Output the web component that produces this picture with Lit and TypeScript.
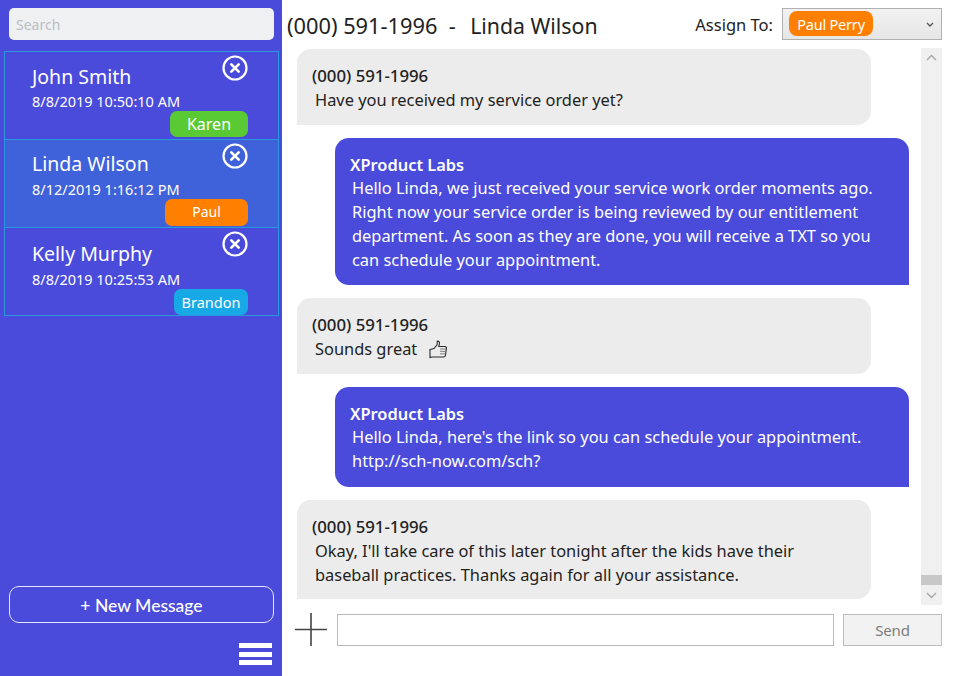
import { LitElement, html, css } from "lit";
import { customElement } from "lit/decorators.js";

const contacts = [
  { name: "John Smith", date: "8/8/2019 10:50:10 AM", tag: "Karen", color: "#59c934", w: 78, h: 26, bottom: 2, shift: 0, gap: 1, fs: 16, sel: false },
  { name: "Linda Wilson", date: "8/12/2019 1:16:12 PM", tag: "Paul", color: "#ff8000", w: 83, h: 27, bottom: 1, shift: -1, gap: 2, fs: 14, sel: true },
  { name: "Kelly Murphy", date: "8/8/2019 10:25:53 AM", tag: "Brandon", color: "#17a8e6", w: 74, h: 26, bottom: 0, shift: 1, gap: 2, fs: 14.5, sel: false },
];

const closeIcon = html`<svg class="x" width="26" height="26" viewBox="0 0 26 26" fill="none" stroke="#fff">
  <circle cx="13" cy="13" r="11.5" stroke-width="2.2"/>
  <path d="M9.3 9.3l7.4 7.4M16.7 9.3l-7.4 7.4" stroke-width="2.6" stroke-linecap="round"/>
</svg>`;

const thumb = html`<svg class="thumb" width="19" height="19" viewBox="0 0 19 19" fill="none" stroke="#2b2b2b" stroke-width="1.1">
  <path d="M1 9.5L5 8.5L8.2 4.5V1.2c1.6-.4 2.6.8 2.2 2.6L9.8 6.5H16c1.2 0 1.6 1 1.4 1.8l-1 7.2c-.2 1-.8 1.5-1.8 1.5H3L1 17.5z"/>
  <path d="M11 9h6M11 11.4h6M11 13.8h5.6" stroke-width=".9" stroke="#777"/>
</svg>`;

@customElement("app-root")
export class AppRoot extends LitElement {
  static styles = css`
    :host { display: flex; width: 965px; height: 676px; background: #fff; overflow: hidden;
      font-family: "Noto Sans", "Open Sans", sans-serif; color: #222; }
    * { box-sizing: border-box; }
    .side { width: 282px; height: 676px; background: #4a4bdb; display: flex; flex-direction: column; padding: 8px 3px 0 4px; color: #fff; }
    .search { height: 32px; margin: 0 5px 12px 5px; background: #eef0f2; border-radius: 5px; color: #bcbec2; font-size: 14px; line-height: 33px; padding-left: 7px; }
    .card { height: 89px; margin-top: -1px; border: 1px solid #2a98de; padding: 12px 0 0 27px; position: relative; }
    .card.sel { background: #3f62da; }
    .name { font-size: 19.5px; line-height: 26px; }
    .date { font-size: 14.5px; line-height: 20px; }
    .x { position: absolute; right: 30px; top: 3px; }
    .tag { position: absolute; right: 30px; border-radius: 7px; color: #fff; line-height: 26px; text-align: center; }
    .spacer { flex: 1; }
    .new { height: 37px; margin: 0 5px 0 5px; border: 1.5px solid #e6e8fb; border-radius: 10px; font-size: 17.5px; line-height: 37px; text-align: center; font-family: "Lato", sans-serif; font-weight: 500; }
    .burger { align-self: flex-end; width: 33px; margin: 20px 7px 11px 0; display: flex; flex-direction: column; gap: 3.5px; }
    .burger i { display: block; height: 5px; background: #fff; }
    .main { width: 683px; height: 676px; display: flex; flex-direction: column; padding: 8px 0 0 5px; }
    .head { height: 32px; display: flex; align-items: center; margin-bottom: 8px; width: 655px; }
    .title { font-size: 21.8px; white-space: pre; flex: 1; padding-top: 2px; }
    .title span { font-size: 21.3px; margin-left: 3px; }
    .assign { font-size: 16.5px; margin-right: 9px; padding-top: 1px; }
    .combo { width: 160px; height: 32px; border: 1.5px solid #b0b0b0; background: linear-gradient(#f2f2f2, #e6e6e6); display: flex; align-items: center; justify-content: space-between; padding: 0 7px 0 6px; }
    .pill { width: 84px; height: 25px; margin-top: -2px; background: #ff8000; border-radius: 8px; color: #fff; font-size: 14.5px; line-height: 27px; text-align: center; letter-spacing: -.2px; }
    .body { height: 557px; display: flex; width: 655px; }
    .list { width: 639px; padding: 1px 0 0 10px; margin-right: -4px; display: flex; flex-direction: column; gap: 13px; }
    .b { width: 574px; border-radius: 14px; font-size: 16.4px; line-height: 24px; }
    .in { background: #ececec; border-bottom-left-radius: 0; padding: 15px 0 0 15px; }
    .out { background: #4a4bdb; color: #fff; border-bottom-right-radius: 0; padding: 15px 0 0 15px; margin-left: 38px; }
    .from { font-weight: 500; font-size: 16.8px; }
    .out .from { font-weight: 600; font-size: 16.4px; }
    .text { padding-left: 3px; white-space: nowrap; }
    .out .text { padding-left: 2px; margin-top: -1px; }
    .sb { width: 21px; background: #f0f0f0; display: flex; flex-direction: column; align-items: center; justify-content: space-between; position: relative; }
    .sb svg { margin: 6px 0; }
    .thumbbar { position: absolute; left: 0; right: 0; top: 527px; height: 10px; background: #c8c8c8; }
    .foot { display: flex; align-items: center; height: 32px; margin-top: 9px; width: 655px; }
    .plus { margin: -2px 10px 0 8px; flex: none; }
    .input { width: 497px; height: 32px; border: 1.5px solid #b8b8b8; background: #fff; }
    .send { width: 99px; height: 32px; margin-left: 9px; border: 1.5px solid #bdbdbd; background: #f2f2f2; color: #7d7d7d; font-size: 15px; line-height: 30px; text-align: center; letter-spacing: -.2px; }
    .thumb { vertical-align: -4px; margin-left: 7px; }
  `;

  render() {
    return html`
      <div class="side">
        <div class="search">Search</div>
        ${contacts.map(c => html`
          <div class="card ${c.sel ? "sel" : ""}">
            <div class="name" style="margin-top:${c.shift}px">${c.name}</div>
            <div class="date" style="margin-top:${c.gap}px">${c.date}</div>
            ${closeIcon}
            <div class="tag" style="background:${c.color};width:${c.w}px;height:${c.h}px;bottom:${c.bottom}px;font-size:${c.fs}px">${c.tag}</div>
          </div>`)}
        <div class="spacer"></div>
        <div class="new">+ New Message</div>
        <div class="burger"><i></i><i></i><i></i></div>
      </div>
      <div class="main">
        <div class="head">
          <div class="title">(000) 591-1996  -  <span>Linda Wilson</span></div>
          <div class="assign">Assign To:</div>
          <div class="combo">
            <div class="pill">Paul Perry</div>
            <svg width="8" height="5" viewBox="0 0 8 5" fill="none" stroke="#555" stroke-width="1.3"><path d="M1 1l3 3 3-3"/></svg>
          </div>
        </div>
        <div class="body">
          <div class="list">
            <div class="b in" style="height:76px">
              <div class="from">(000) 591-1996</div>
              <div class="text">Have you received my service order yet?</div>
            </div>
            <div class="b out" style="height:147px">
              <div class="from">XProduct Labs</div>
              <div class="text">Hello Linda, we just received your service work order moments ago.<br>Right now your service order is being reviewed by our entitlement<br>department. As soon as they are done, you will receive a TXT so you<br>can schedule your appointment.</div>
            </div>
            <div class="b in" style="height:76px">
              <div class="from">(000) 591-1996</div>
              <div class="text">Sounds great ${thumb}</div>
            </div>
            <div class="b out" style="height:100px">
              <div class="from">XProduct Labs</div>
              <div class="text">Hello Linda, here's the link so you can schedule your appointment.<br>http://sch-now.com/sch?</div>
            </div>
            <div class="b in" style="height:99px">
              <div class="from">(000) 591-1996</div>
              <div class="text">Okay, I'll take care of this later tonight after the kids have their<br>baseball practices. Thanks again for all your assistance.</div>
            </div>
          </div>
          <div class="sb">
            <svg width="11" height="7" viewBox="0 0 11 7" fill="none" stroke="#a6a6a6" stroke-width="1.4"><path d="M1 6l4.5-4.5L10 6"/></svg>
            <div class="thumbbar"></div>
            <svg width="11" height="7" viewBox="0 0 11 7" fill="none" stroke="#a6a6a6" stroke-width="1.4"><path d="M1 1l4.5 4.5L10 1"/></svg>
          </div>
        </div>
        <div class="foot">
          <svg class="plus" width="32" height="33" viewBox="0 0 32 33" stroke="#444" stroke-width="1.6"><path d="M0 16.5h32M16 0v33"/></svg>
          <div class="input"></div>
          <div class="send">Send</div>
        </div>
      </div>
    `;
  }
}
